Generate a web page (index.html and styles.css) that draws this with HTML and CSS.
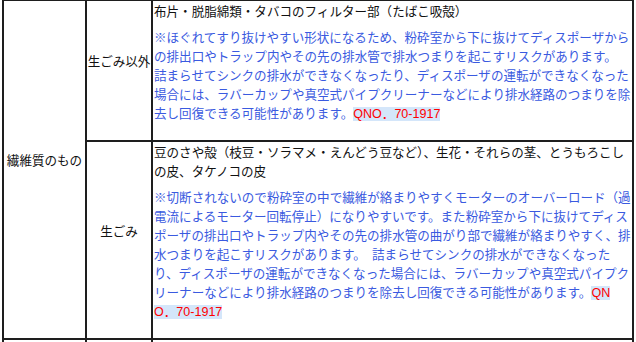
FILE: index.html
```html
<!DOCTYPE html>
<html lang="ja">
<head>
<meta charset="utf-8">
<title>ディスポーザ 投入不可物</title>
<link rel="stylesheet" href="styles.css">
</head>
<body>
<div class="sheet">
  <div class="cell cat">繊維質のもの</div>
  <div class="cell kind">生ごみ以外</div>
  <div class="cell desc">
    <p class="items">布片・脱脂綿類・タバコのフィルター部（たばこ吸殻）</p>
    <p class="note">※ほぐれてすり抜けやすい形状になるため、粉砕室から下に抜けてディスポーザからの排出口やトラップ内やその先の排水管で排水つまりを起こすリスクがあります。　詰まらせてシンクの排水ができなくなったり、ディスポーザの運転ができなくなった場合には、ラバーカップや真空式パイプクリーナーなどにより排水経路のつまりを除去し回復できる可能性があります。<span class="ref">QNO．70-1917</span></p>
  </div>
  <div class="cell kind">生ごみ</div>
  <div class="cell desc">
    <p class="items">豆のさや殻（枝豆・ソラマメ・えんどう豆など）、生花・それらの茎、とうもろこしの皮、タケノコの皮</p>
    <p class="note">※切断されないので粉砕室の中で繊維が絡まりやすくモーターのオーバーロード（過電流によるモーター回転停止）になりやすいです。また粉砕室から下に抜けてディスポーザの排出口やトラップ内やその先の排水管の曲がり部で繊維が絡まりやすく、排水つまりを起こすリスクがあります。　詰まらせてシンクの排水ができなくなったり、ディスポーザの運転ができなくなった場合には、ラバーカップや真空式パイプクリーナーなどにより排水経路のつまりを除去し回復できる可能性があります。<span class="ref">QNO．70-1917</span></p>
  </div>
  <div class="cell cat next"></div>
  <div class="cell kind next"></div>
  <div class="cell desc next">
    <p class="items">とうもろこしの芯・貝殻・魚の大きな骨など</p>
  </div>
</div>
</body>
</html>
```
FILE: styles.css
```css
html, body {
  background: #ffffff;
}

body {
  margin: 0 2px;
  font-family: "Liberation Sans", "Noto Sans CJK JP", sans-serif;
  font-size: 12.55px;
  line-height: 19px;
  color: #111111;
  overflow: hidden;
}

.sheet {
  display: grid;
  grid-template-columns: 83px 66px 481px;
  border-left: 2px solid #1e1e1e;
  border-top: 1px solid #1e1e1e;
}

.cell {
  box-sizing: border-box;
  border-right: 2px solid #1e1e1e;
  border-bottom: 2px solid #1e1e1e;
}

.cat {
  grid-row: span 2;
  display: flex;
  align-items: center;
  justify-content: center;
  padding-bottom: 16px;
  white-space: nowrap;
}

.kind {
  display: flex;
  align-items: center;
  justify-content: center;
  padding-bottom: 16px;
  white-space: nowrap;
}

.desc {
  padding: 2px 0 16px 1px;
  word-break: break-all;
}

.items {
  margin: 0 0 7px;
  color: #111111;
}

.note {
  margin: 0;
  color: #3a5ae0;
}

.ref {
  color: #ff0000;
  background: #d4e6fa;
}

.cat.next,
.kind.next {
  grid-row: auto;
  height: 80px;
}

.desc.next {
  padding-top: 2px;
  line-height: 14px;
}
```
